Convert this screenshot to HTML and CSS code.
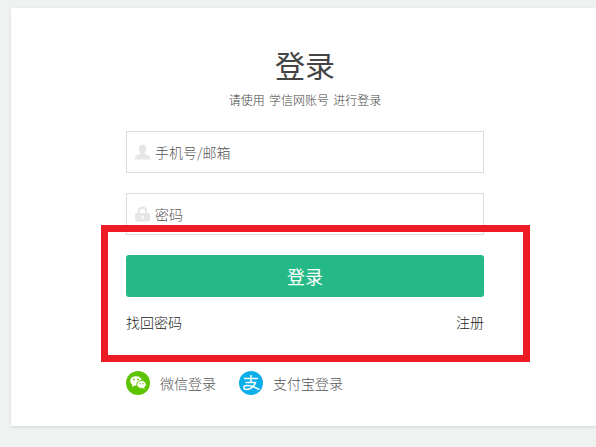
FILE: index.html
```html
<!DOCTYPE html>
<html lang="zh">
<head>
<meta charset="utf-8">
<title>登录</title>
<link rel="stylesheet" href="styles.css">
</head>
<body>
<main class="card">
  <h1 class="title">登录</h1>
  <p class="subtitle">请使用 学信网账号 进行登录</p>
  <form class="form">
    <div class="field">
      <svg class="field-icon" viewBox="0 0 16 16" aria-hidden="true"><path d="M8 0c2.600 0 4 1.800 4 4.200 0 1.600-.6 3-1.500 4v1.300c0 .7 1.200 1 2.700 1.600 1.500.6 2.800 1.200 2.800 2.400V16H0v-2.500c0-1.200 1.300-1.800 2.800-2.400 1.500-.6 2.700-.9 2.700-1.600V8.200C4.600 7.200 4 5.800 4 4.200 4 1.800 5.400 0 8 0z"/></svg>
      <span class="placeholder">手机号/邮箱</span>
    </div>
    <div class="field field-password">
      <svg class="field-icon" viewBox="0 0 16 16" aria-hidden="true"><path fill-rule="evenodd" d="M8 0c3 0 5 2 5 4.500V7h1.300c.9 0 1.700.7 1.700 1.500v6c0 .8-.8 1.500-1.700 1.500H1.700C.8 16 0 15.300 0 14.500v-6C0 7.700.8 7 1.700 7H3V4.500C3 2 5 0 8 0zM8 2.300c-1.600 0-2.700 1-2.700 2.300V7h5.400V4.600c0-1.300-1.100-2.300-2.700-2.300zM7 9.500v4h2v-4z"/></svg>
      <span class="placeholder">密码</span>
    </div>
    <button class="submit" type="button">登录</button>
    <div class="links">
      <a class="link">找回密码</a>
      <a class="link">注册</a>
    </div>
    <div class="social">
      <a class="social-item">
        <svg class="social-icon" viewBox="0 0 24 24" aria-hidden="true">
          <circle cx="12" cy="12" r="12" fill="#5ec400"/>
          <ellipse cx="10" cy="10" rx="5.800" ry="4.800" fill="#fff"/>
          <path d="M6.500 13.500 6 16l2.500-1.500z" fill="#fff"/>
          <ellipse cx="15.500" cy="13.500" rx="4.800" ry="4" fill="#fff" stroke="#5ec400" stroke-width="1"/>
          <path d="M18 16.500l1 1.800-2.500-1.200z" fill="#fff"/>
          <circle cx="8" cy="8.500" r=".9" fill="#5ec400"/>
          <circle cx="12" cy="8.500" r=".9" fill="#5ec400"/>
          <circle cx="14" cy="12.800" r=".7" fill="#5ec400"/>
          <circle cx="17" cy="12.800" r=".7" fill="#5ec400"/>
        </svg>
        <span>微信登录</span>
      </a>
      <a class="social-item">
        <svg class="social-icon" viewBox="0 0 24 24" aria-hidden="true">
          <circle cx="12" cy="12" r="12" fill="#0aaee9"/>
          <path d="M5 7.500h14M12 4v7.500M6.500 11.500h10c-1.500 4-5 7-9 7-3.200 0-3.700-3.300-1-3.800 3.500-.6 9 1 14 4" fill="none" stroke="#fff" stroke-width="1.500"/>
        </svg>
        <span>支付宝登录</span>
      </a>
    </div>
  </form>
  <div class="annotation" aria-hidden="true"></div>
</main>
</body>
</html>
```

FILE: styles.css
```css
* { box-sizing: border-box; }

html, body {
  margin: 0;
  height: 100%;
  overflow: hidden;
}

body {
  background: #eef2f1;
  font-family: "Noto Sans CJK SC", sans-serif;
  font-weight: 300;
  padding: 8px 0 0 11px;
}

.card {
  position: relative;
  width: 588px;
  height: 418px;
  background: #fff;
  box-shadow: 0 1px 3px rgba(0, 0, 0, 0.12);
  display: flex;
  flex-direction: column;
  align-items: center;
  padding-top: 36px;
}

.title {
  margin: 0;
  font-size: 30px;
  font-weight: 400;
  line-height: 40px;
  color: #444;
}

.subtitle {
  margin: 8px 0 0;
  font-size: 12px;
  line-height: 16px;
  word-spacing: 1.500px;
  color: #444;
}

.form {
  width: 358px;
  margin-top: 23px;
  display: flex;
  flex-direction: column;
}

.field {
  height: 42px;
  border: 1px solid #dcdcdc;
  display: flex;
  align-items: center;
  padding-left: 8px;
  gap: 5px;
}

.field-password {
  margin-top: 20px;
}

.field-icon {
  width: 15px;
  height: 16px;
  fill: #e6e6e6;
  flex: none;
}

.placeholder {
  font-size: 14px;
  line-height: 18px;
  color: #555;
}

.submit {
  margin-top: 20px;
  height: 42px;
  border: 0;
  border-radius: 3px;
  background: #24b986;
  color: #fff;
  font: inherit;
  font-size: 18px;
  font-weight: 400;
}

.links {
  margin-top: 16px;
  display: flex;
  justify-content: space-between;
  font-size: 14px;
  line-height: 18px;
  color: #222;
}

.social {
  margin-top: 40px;
  display: flex;
  gap: 23px;
  font-size: 14px;
  color: #555;
}

.social-item {
  display: flex;
  align-items: center;
  gap: 10px;
}

.social-icon {
  width: 24px;
  height: 24px;
  flex: none;
}

.annotation {
  position: absolute;
  left: 90px;
  top: 217px;
  width: 429px;
  height: 137px;
  border: 7px solid #ed1c24;
  pointer-events: none;
}
```
